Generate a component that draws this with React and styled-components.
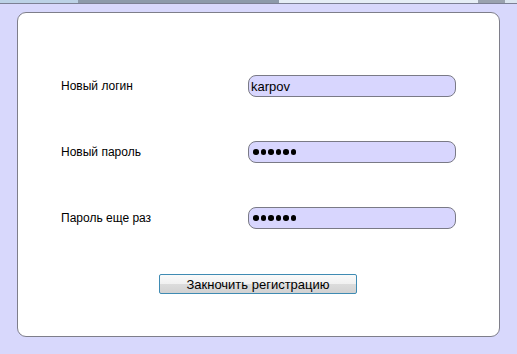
import React from 'react';
import styled, { createGlobalStyle } from 'styled-components';

const GlobalStyle = createGlobalStyle`
  html, body {
    margin: 0;
    padding: 0;
    background: #d8d8fc;
    font-family: 'Liberation Sans', Arial, sans-serif;
  }
`;

const TopBar = styled.div`
  display: flex;
  height: 3px;
  border-bottom: 1px solid #7c8094;
`;

const TopSegment = styled.div`
  width: ${(p) => p.w}px;
  flex: ${(p) => (p.grow ? 1 : 'none')};
  background: ${(p) => p.color};
`;

const Card = styled.div`
  box-sizing: border-box;
  width: 483px;
  height: 325px;
  margin: 8px 0 0 17px;
  background: #fff;
  border: 1px solid #7e7e8a;
  border-radius: 9px;
  padding: 62px 0 0 43px;
  display: flex;
  flex-direction: column;
`;

const Form = styled.div`
  display: grid;
  grid-template-columns: 187px 208px;
  row-gap: 44px;
  align-items: center;
`;

const Label = styled.label`
  font-size: 12px;
  color: #000;
`;

const Field = styled.input`
  box-sizing: border-box;
  width: 208px;
  height: 22px;
  margin: 0;
  padding: 0 0 0 2px;
  border: 1px solid #7a7a86;
  border-radius: 8px;
  background: #d8d6fe;
  font-family: 'Liberation Sans', Arial, sans-serif;
  font-size: 13px;
  color: #000;
  outline: none;
`;

const Dots = styled.div`
  box-sizing: border-box;
  width: 208px;
  height: 22px;
  padding: 0 0 0 4px;
  border: 1px solid #7a7a86;
  border-radius: 8px;
  background: #d8d6fe;
  display: flex;
  align-items: center;
  gap: 2px;
`;

const Dot = styled.span`
  width: 5.5px;
  height: 5.5px;
  border-radius: 50%;
  background: #000;
`;

const ButtonRow = styled.div`
  margin-top: 45px;
  padding-left: 98px;
`;

const Button = styled.button`
  box-sizing: border-box;
  width: 198px;
  height: 20px;
  margin: 0;
  padding: 0;
  border: 1px solid #3f8bb3;
  border-radius: 2px;
  background: linear-gradient(#fafafa, #f0f0f0 50%, #dcdcdc 51%, #d2d2d2);
  font-family: 'Liberation Sans', Arial, sans-serif;
  font-size: 13px;
  color: #000;
`;

const PasswordBox = () => (
  <Dots>
    {[0, 1, 2, 3, 4, 5].map((i) => (
      <Dot key={i} />
    ))}
  </Dots>
);

const App = () => (
  <>
    <GlobalStyle />
    <TopBar>
      <TopSegment w={78} color="#bcd2e6" />
      <TopSegment w={201} color="#8d9aaa" />
      <TopSegment w={199} color="#e6eef6" />
      <TopSegment w={27} color="#9aa2ae" />
      <TopSegment grow color="#dce6f0" />
    </TopBar>
    <Card>
      <Form>
        <Label>Новый логин</Label>
        <Field defaultValue="karpov" />
        <Label>Новый пароль</Label>
        <PasswordBox />
        <Label>Пароль еще раз</Label>
        <PasswordBox />
      </Form>
      <ButtonRow>
        <Button>Закночить регистрацию</Button>
      </ButtonRow>
    </Card>
  </>
);

export default App;
